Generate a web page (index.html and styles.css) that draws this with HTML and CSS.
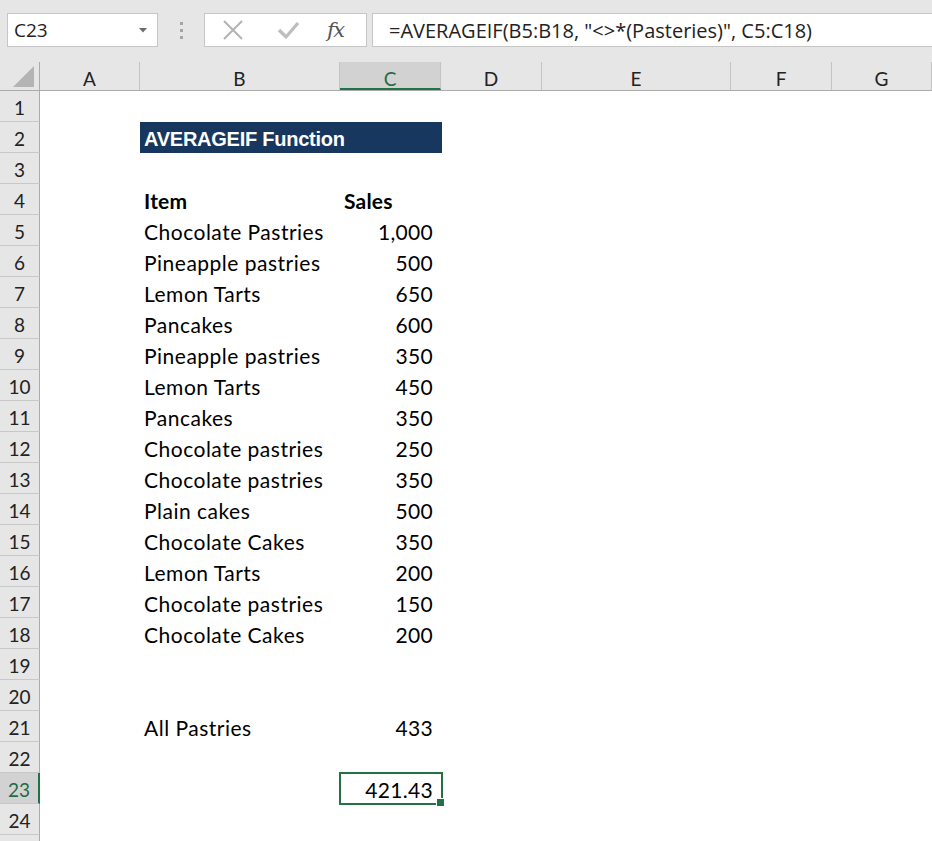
FILE: index.html
```html
<!DOCTYPE html>
<html>
<head>
<meta charset="utf-8">
<link rel="stylesheet" href="styles.css">
</head>
<body>
<div class="toolbar">
  <div class="namebox">
    <span class="nb-text">C23</span>
    <svg class="caret" width="8" height="5" viewBox="0 0 8 5"><path d="M0 0H8L4 4.5Z" fill="#6b6b6b"/></svg>
  </div>
  <div class="grip"><i></i><i></i><i></i></div>
  <div class="fxbox">
    <svg class="ico" width="22" height="20" viewBox="0 0 22 20"><path d="M2 1L20 19M20 1L2 19" stroke="#b3b3b3" stroke-width="2" fill="none"/></svg>
    <svg class="ico" width="22" height="20" viewBox="0 0 22 20"><path d="M2 10L9 17L21 3" stroke="#bdbdbd" stroke-width="3.2" fill="none"/></svg>
    <span class="fx">fx</span>
  </div>
  <div class="formula">=AVERAGEIF(B5:B18, "&lt;&gt;*(Pasteries)", C5:C18)</div>
</div>

<div class="sheet">
  <div class="hrow">
    <div class="corner"><svg width="22" height="22" viewBox="0 0 22 22"><path d="M21 0V21H0Z" fill="#b4b4b4"/></svg></div>
    <div class="ch w-a">A</div>
    <div class="ch w-b">B</div>
    <div class="ch w-c sel">C</div>
    <div class="ch w-d">D</div>
    <div class="ch w-e">E</div>
    <div class="ch w-f">F</div>
    <div class="ch w-g">G</div>
  </div>

  <div class="row"><div class="rh">1</div><div class="c"></div><div class="c"></div><div class="c"></div><div class="c"></div></div>
  <div class="row"><div class="rh">2</div><div class="c"></div><div class="title">AVERAGEIF Function</div><div class="c"></div></div>
  <div class="row"><div class="rh">3</div><div class="c"></div><div class="c"></div><div class="c"></div><div class="c"></div></div>
  <div class="row"><div class="rh">4</div><div class="c"></div><div class="c t b">Item</div><div class="c t b">Sales</div><div class="c"></div></div>
  <div class="row"><div class="rh">5</div><div class="c"></div><div class="c t">Chocolate Pastries</div><div class="c n">1,000</div><div class="c"></div></div>
  <div class="row"><div class="rh">6</div><div class="c"></div><div class="c t">Pineapple pastries</div><div class="c n">500</div><div class="c"></div></div>
  <div class="row"><div class="rh">7</div><div class="c"></div><div class="c t">Lemon Tarts</div><div class="c n">650</div><div class="c"></div></div>
  <div class="row"><div class="rh">8</div><div class="c"></div><div class="c t">Pancakes</div><div class="c n">600</div><div class="c"></div></div>
  <div class="row"><div class="rh">9</div><div class="c"></div><div class="c t">Pineapple pastries</div><div class="c n">350</div><div class="c"></div></div>
  <div class="row"><div class="rh">10</div><div class="c"></div><div class="c t">Lemon Tarts</div><div class="c n">450</div><div class="c"></div></div>
  <div class="row"><div class="rh">11</div><div class="c"></div><div class="c t">Pancakes</div><div class="c n">350</div><div class="c"></div></div>
  <div class="row"><div class="rh">12</div><div class="c"></div><div class="c t">Chocolate pastries</div><div class="c n">250</div><div class="c"></div></div>
  <div class="row"><div class="rh">13</div><div class="c"></div><div class="c t">Chocolate pastries</div><div class="c n">350</div><div class="c"></div></div>
  <div class="row"><div class="rh">14</div><div class="c"></div><div class="c t">Plain cakes</div><div class="c n">500</div><div class="c"></div></div>
  <div class="row"><div class="rh">15</div><div class="c"></div><div class="c t">Chocolate Cakes</div><div class="c n">350</div><div class="c"></div></div>
  <div class="row"><div class="rh">16</div><div class="c"></div><div class="c t">Lemon Tarts</div><div class="c n">200</div><div class="c"></div></div>
  <div class="row"><div class="rh">17</div><div class="c"></div><div class="c t">Chocolate pastries</div><div class="c n">150</div><div class="c"></div></div>
  <div class="row"><div class="rh">18</div><div class="c"></div><div class="c t">Chocolate Cakes</div><div class="c n">200</div><div class="c"></div></div>
  <div class="row"><div class="rh">19</div><div class="c"></div><div class="c"></div><div class="c"></div><div class="c"></div></div>
  <div class="row"><div class="rh">20</div><div class="c"></div><div class="c"></div><div class="c"></div><div class="c"></div></div>
  <div class="row"><div class="rh">21</div><div class="c"></div><div class="c t">All Pastries</div><div class="c n">433</div><div class="c"></div></div>
  <div class="row"><div class="rh">22</div><div class="c"></div><div class="c"></div><div class="c"></div><div class="c"></div></div>
  <div class="row"><div class="rh rsel">23</div><div class="c"></div><div class="c"></div><div class="c n active">421.43</div><div class="c"></div></div>
  <div class="row"><div class="rh">24</div><div class="c"></div><div class="c"></div><div class="c"></div><div class="c"></div></div>
  <div class="row"><div class="rh"></div><div class="c"></div><div class="c"></div><div class="c"></div><div class="c"></div></div>
</div>
</body>
</html>
```

FILE: styles.css
```css
* { box-sizing: border-box; }
html, body { margin: 0; padding: 0; }
body {
  width: 932px;
  height: 841px;
  overflow: hidden;
  background: #ffffff;
  font-family: "Open Sans", "Noto Sans", sans-serif;
  color: #000;
}

.toolbar {
  height: 62px;
  background: #e6e6e6;
  display: flex;
  align-items: flex-start;
  padding-top: 13px;
  padding-left: 7px;
}
.namebox {
  width: 151px;
  height: 34px;
  background: #fff;
  border: 1px solid #c6c6c6;
  display: flex;
  align-items: center;
  justify-content: space-between;
  padding: 0 10px 0 6px;
  font-size: 19px;
  color: #222;
}
.grip {
  width: 46px;
  height: 34px;
  display: flex;
  flex-direction: column;
  align-items: center;
  justify-content: center;
  gap: 4px;
}
.grip i {
  display: block;
  width: 3px;
  height: 3px;
  background: #a5a5a5;
}
.fxbox {
  width: 163px;
  height: 34px;
  background: #fff;
  border: 1px solid #c6c6c6;
  display: flex;
  align-items: center;
  padding-left: 17px;
  gap: 33px;
}
.fxbox .ico { display: block; }
.fx {
  font-family: "DejaVu Serif", "Liberation Serif", serif;
  font-style: italic;
  font-size: 21px;
  color: #555;
  margin-left: -5px;
  letter-spacing: -1.5px;
}
.formula {
  flex: 1;
  height: 34px;
  margin-left: 5px;
  background: #fff;
  border: 1px solid #c6c6c6;
  border-right: none;
  display: flex;
  align-items: center;
  padding-left: 16px;
  font-size: 20px;
  color: #222;
  white-space: nowrap;
}

.sheet {
  font-family: "Lato", "Open Sans", sans-serif;
}
.hrow {
  display: flex;
  height: 29px;
  background: #e6e6e6;
  border-bottom: 1px solid #ababab;
}
.corner {
  width: 40px;
  border-right: 1px solid #ababab;
  display: flex;
  align-items: flex-end;
  justify-content: flex-end;
  padding: 0 4px 2px 0;
}
.corner svg { display: block; }
.ch {
  border-right: 1px solid #c4c4c4;
  display: flex;
  align-items: center;
  justify-content: center;
  font-size: 19px;
  color: #222;
  padding-top: 5px;
}
.ch.sel {
  background: #d2d2d2;
  border-bottom: 2px solid #217346;
  color: #1e6b45;
  padding-top: 7px;
}
.w-a { width: 100px; }
.w-b { width: 200px; }
.w-c { width: 101px; }
.w-d { width: 101px; }
.w-e { width: 189px; }
.w-f { width: 101px; }
.w-g { width: 100px; }

.row {
  display: grid;
  grid-template-columns: 40px 100px 200px 101px 1fr;
  height: 31px;
}
.rh {
  background: #e6e6e6;
  border-right: 1px solid #ababab;
  border-bottom: 1px solid #c8c8c8;
  display: flex;
  align-items: center;
  justify-content: center;
  font-size: 19px;
  color: #222;
  padding-top: 3px;
}
.rh.rsel {
  background: #d2d2d2;
  border-right: 2px solid #217346;
  color: #1e6b45;
}
.c {
  display: flex;
  align-items: flex-end;
  padding: 0 8px 2px 4px;
  font-size: 21px;
  letter-spacing: 0.5px;
  white-space: nowrap;
  position: relative;
}
.c.b { font-weight: 700; letter-spacing: 0.2px; }
.c.n { justify-content: flex-end; letter-spacing: 0.3px; }
.title {
  grid-column: span 2;
  background: #17375e;
  color: #fff;
  font-family: "Liberation Sans", Arial, sans-serif;
  font-weight: 700;
  font-size: 20px;
  letter-spacing: -0.25px;
  display: flex;
  align-items: center;
  padding-left: 4px;
  padding-top: 3px;
  margin-right: -1px;
}
.active::before {
  content: "";
  position: absolute;
  top: -1px;
  left: -1px;
  right: -2px;
  bottom: -1px;
  border: 2px solid #217346;
}
.active::after {
  content: "";
  position: absolute;
  right: -4px;
  bottom: -3px;
  width: 7px;
  height: 7px;
  background: #217346;
  border: 1px solid #fff;
}
```
